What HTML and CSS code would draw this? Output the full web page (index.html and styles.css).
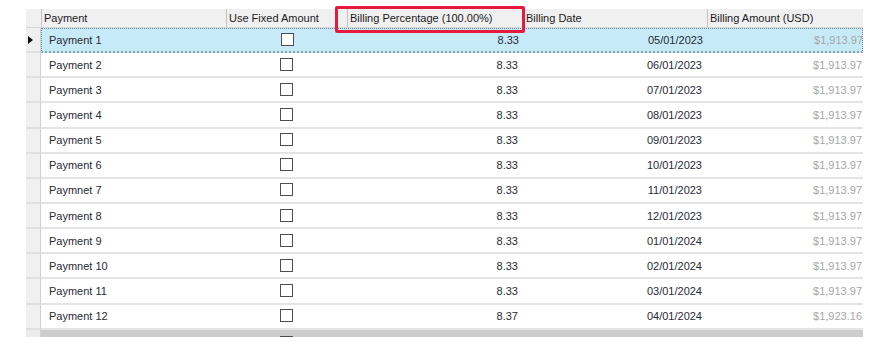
FILE: index.html
```html
<!DOCTYPE html>
<html>
<head>
<meta charset="utf-8">
<link rel="stylesheet" href="styles.css">
</head>
<body>
<div class="page">
  <div class="grid">
    <div class="row head">
      <div class="rh"></div>
      <div class="hc">Payment</div>
      <div class="hc">Use Fixed Amount</div>
      <div class="hc">Billing Percentage (100.00%)</div>
      <div class="hc">Billing Date</div>
      <div class="hc last">Billing Amount (USD)</div>
    </div>
    <div class="row sel">
      <div class="rh"><span class="arrow"></span></div>
      <div class="cells">
        <div class="c name">Payment 1</div><div class="c chk"><span class="box"></span></div><div class="c num">8.33</div><div class="c num">05/01/2023</div><div class="c amt">$1,913.97</div>
      </div>
    </div>
    <div class="row"><div class="rh"></div><div class="cells"><div class="c name">Payment 2</div><div class="c chk"><span class="box"></span></div><div class="c num">8.33</div><div class="c num">06/01/2023</div><div class="c amt">$1,913.97</div></div></div>
    <div class="row"><div class="rh"></div><div class="cells"><div class="c name">Payment 3</div><div class="c chk"><span class="box"></span></div><div class="c num">8.33</div><div class="c num">07/01/2023</div><div class="c amt">$1,913.97</div></div></div>
    <div class="row"><div class="rh"></div><div class="cells"><div class="c name">Payment 4</div><div class="c chk"><span class="box"></span></div><div class="c num">8.33</div><div class="c num">08/01/2023</div><div class="c amt">$1,913.97</div></div></div>
    <div class="row"><div class="rh"></div><div class="cells"><div class="c name">Payment 5</div><div class="c chk"><span class="box"></span></div><div class="c num">8.33</div><div class="c num">09/01/2023</div><div class="c amt">$1,913.97</div></div></div>
    <div class="row"><div class="rh"></div><div class="cells"><div class="c name">Payment 6</div><div class="c chk"><span class="box"></span></div><div class="c num">8.33</div><div class="c num">10/01/2023</div><div class="c amt">$1,913.97</div></div></div>
    <div class="row"><div class="rh"></div><div class="cells"><div class="c name">Paymnet 7</div><div class="c chk"><span class="box"></span></div><div class="c num">8.33</div><div class="c num">11/01/2023</div><div class="c amt">$1,913.97</div></div></div>
    <div class="row"><div class="rh"></div><div class="cells"><div class="c name">Payment 8</div><div class="c chk"><span class="box"></span></div><div class="c num">8.33</div><div class="c num">12/01/2023</div><div class="c amt">$1,913.97</div></div></div>
    <div class="row"><div class="rh"></div><div class="cells"><div class="c name">Payment 9</div><div class="c chk"><span class="box"></span></div><div class="c num">8.33</div><div class="c num">01/01/2024</div><div class="c amt">$1,913.97</div></div></div>
    <div class="row"><div class="rh"></div><div class="cells"><div class="c name">Paymnet 10</div><div class="c chk"><span class="box"></span></div><div class="c num">8.33</div><div class="c num">02/01/2024</div><div class="c amt">$1,913.97</div></div></div>
    <div class="row"><div class="rh"></div><div class="cells"><div class="c name">Payment 11</div><div class="c chk"><span class="box"></span></div><div class="c num">8.33</div><div class="c num">03/01/2024</div><div class="c amt">$1,913.97</div></div></div>
    <div class="row"><div class="rh"></div><div class="cells"><div class="c name">Payment 12</div><div class="c chk"><span class="box"></span></div><div class="c num">8.37</div><div class="c num">04/01/2024</div><div class="c amt">$1,923.16</div></div></div>
    <div class="row newrow"><div class="rh"></div><div class="cells"><div class="c name"></div><div class="c chk"><span class="box"></span></div><div class="c num"></div><div class="c num"></div><div class="c amt"></div></div></div>
  </div>
  <div class="callout"></div>
</div>
</body>
</html>
```
FILE: styles.css
```css
html, body {
  margin: 0;
  padding: 0;
  background: #ffffff;
}
.page {
  position: relative;
  width: 870px;
  height: 346px;
  overflow: hidden;
  padding: 9px 0 0 26px;
  box-sizing: border-box;
}
.grid {
  width: 837px;
  height: 328px;
  overflow: hidden;
  font-family: "Liberation Sans", Arial, sans-serif;
  font-size: 11px;
  color: #2a2a33;
}
.row {
  display: grid;
  grid-template-columns: 15px 822px;
  height: 25.15px;
  box-sizing: border-box;
}
.row.head {
  grid-template-columns: 15px 185px 121px 176px 184px 156px;
  height: 19px;
  background: #f0f0f0;
  border-bottom: 1px solid #d6d6d6;
  color: #1c1c22;
}
.hc {
  display: flex;
  align-items: center;
  padding-left: 2px;
  border-left: 1px solid #c4c4c4;
  white-space: nowrap;
  overflow: hidden;
}
.rh {
  background: #f0f0f0;
  border-bottom: 2px solid #e0e0e0;
  border-right: 1px solid #d0d0d0;
  display: flex;
  align-items: center;
  padding-left: 2px;
}
.head .rh {
  border-bottom: none;
  border-right: none;
}
.arrow {
  width: 0;
  height: 0;
  border-top: 4px solid transparent;
  border-bottom: 4px solid transparent;
  border-left: 5px solid #111;
}
.cells {
  display: grid;
  grid-template-columns: 185px 121px 176px 184px 156px;
  border-bottom: 2px solid #e4e4e4;
  background: #ffffff;
}
.sel .cells {
  background: #c6eaf8;
  border: 1px dotted #6a8a96;
  border-bottom: 2px dotted #8aa0a8;
}
.c {
  display: flex;
  align-items: center;
  white-space: nowrap;
  overflow: hidden;
}
.name {
  padding-left: 8px;
}
.sel .name {
  padding-left: 7px;
}
.chk {
  justify-content: center;
}
.box {
  width: 11px;
  height: 11px;
  border: 1px solid #4e4e4e;
  background: #ffffff;
  margin-bottom: 1px;
}
.num {
  justify-content: flex-end;
  padding-right: 5px;
}
.amt {
  justify-content: flex-end;
  padding-right: 1px;
  color: #a6a6a6;
}
.newrow .cells {
  background: #cdcdcd;
  border-bottom: none;
  align-items: start;
}
.newrow .chk {
  align-items: flex-start;
  padding-top: 6px;
}
.newrow .rh {
  background: #ececec;
}
.callout {
  position: absolute;
  left: 335px;
  top: 6px;
  width: 190px;
  height: 27px;
  box-sizing: border-box;
  border: 3px solid #e8183e;
  border-radius: 2px;
}
```
